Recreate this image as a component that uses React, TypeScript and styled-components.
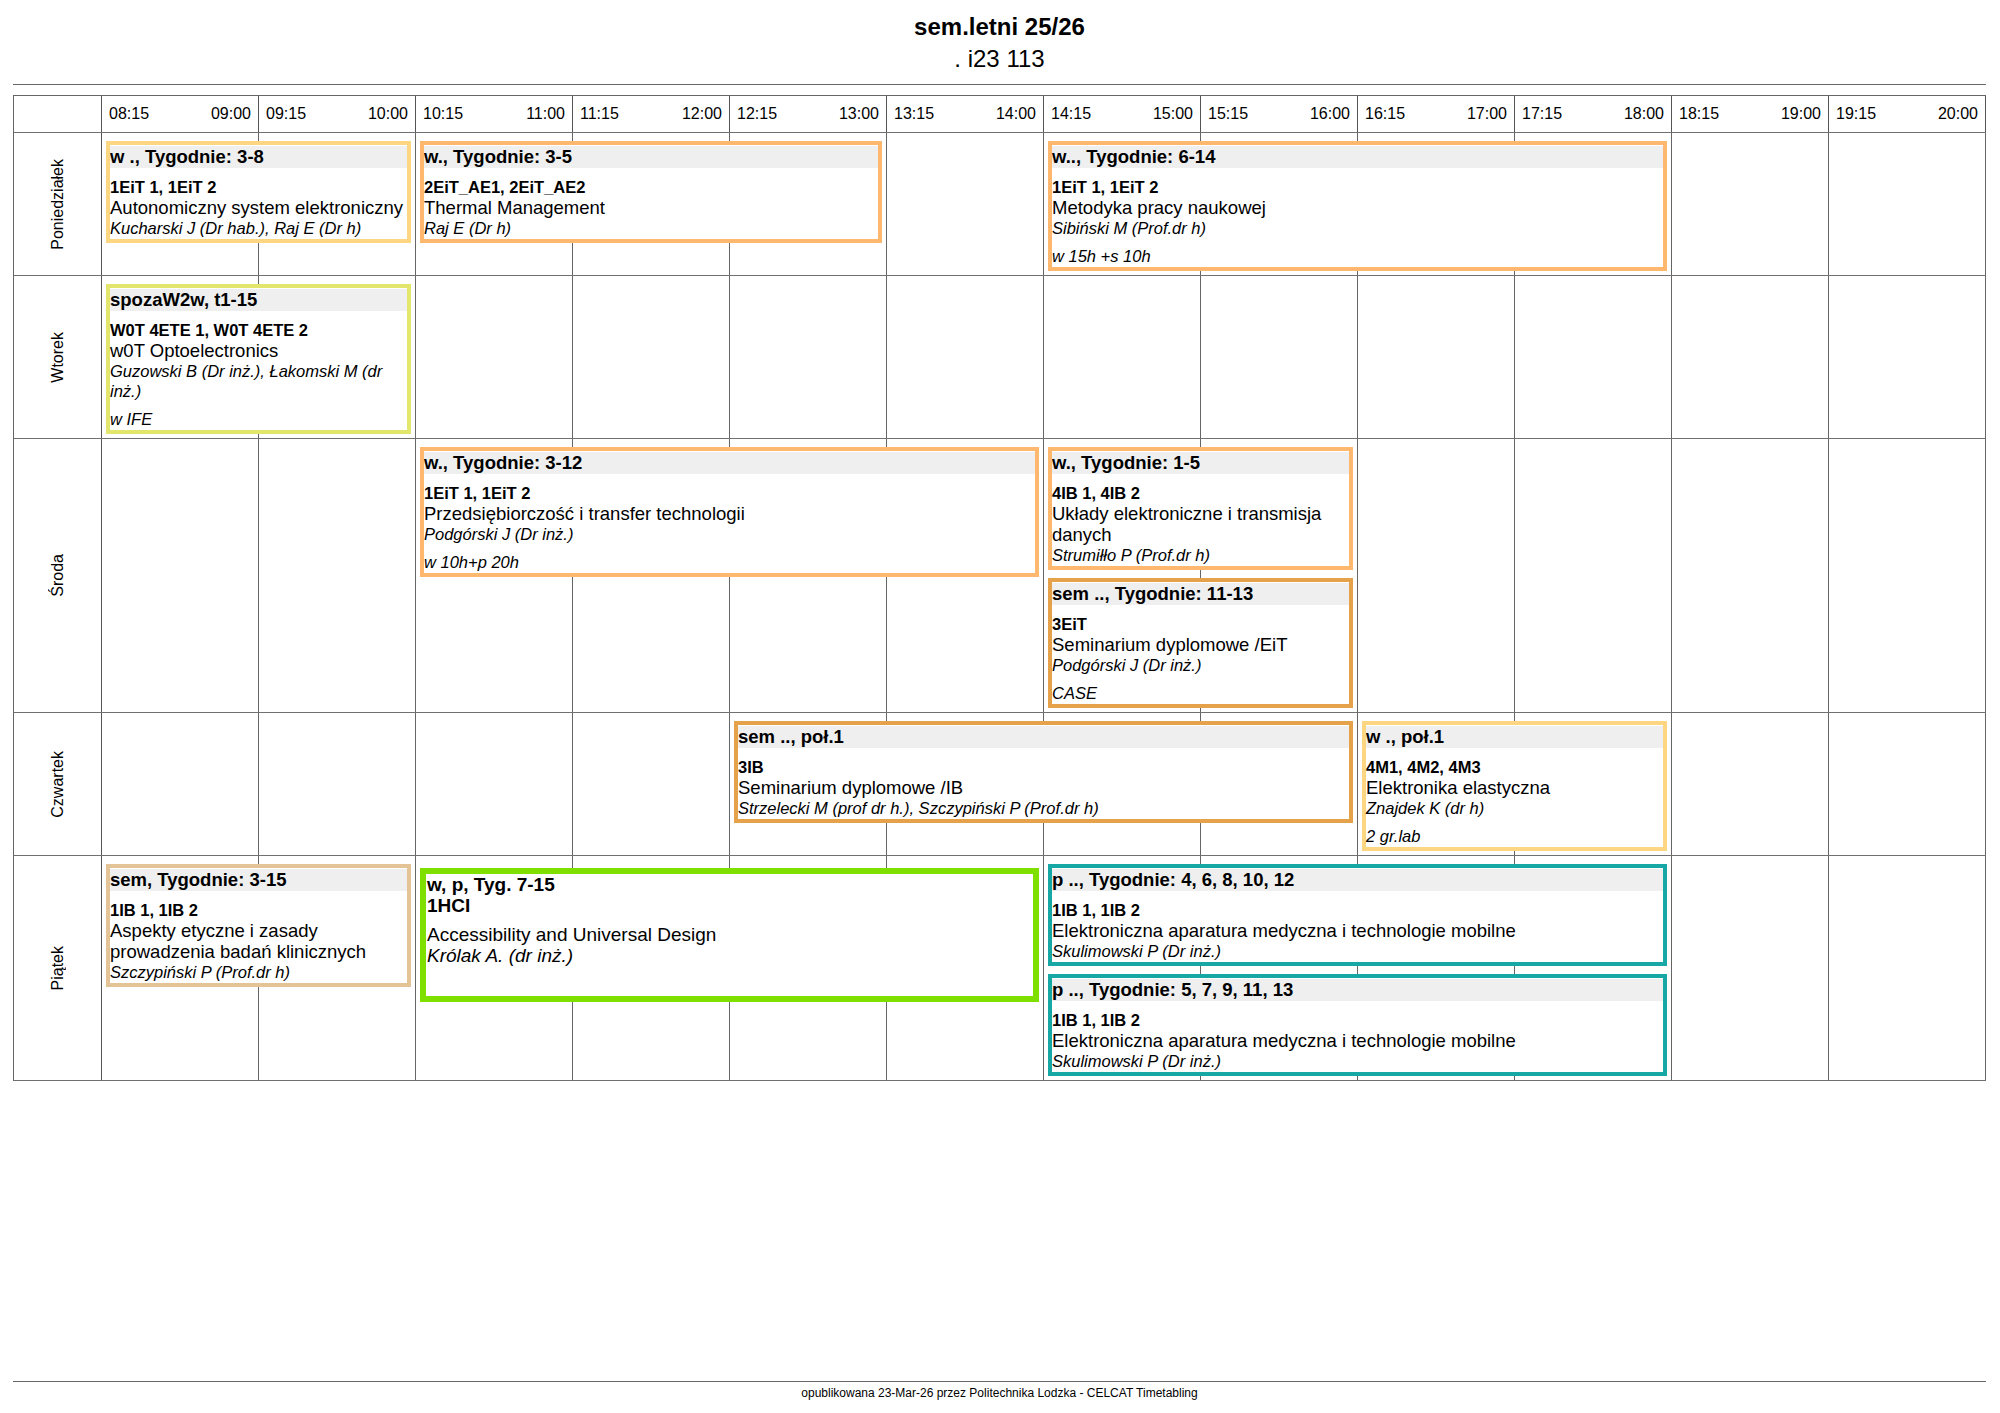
import React from "react";
import styled, { createGlobalStyle } from "styled-components";

const GlobalStyle = createGlobalStyle`
  html, body {
    margin: 0;
    padding: 0;
    background: #fff;
  }
  body {
    font-family: "Liberation Sans", Arial, Helvetica, sans-serif;
    color: #000;
  }
`;

const SLOT = 157;
const DAY_COL = 88;

const Page = styled.div`
  box-sizing: border-box;
  width: 2000px;
  height: 1413px;
  padding: 0 14px 0 13px;
  display: flex;
  flex-direction: column;
`;

const TitleBlock = styled.header`
  padding-top: 13px;
  text-align: center;
`;

const Title = styled.h1`
  margin: 0;
  font-size: 24px;
  line-height: 28px;
  font-weight: 700;
`;

const Subtitle = styled.div`
  margin-top: 4px;
  font-size: 24px;
  line-height: 28px;
`;

const Rule = styled.hr`
  margin: 11px 0 0;
  border: none;
  border-top: 1px solid #666;
  height: 0;
`;

const Table = styled.div`
  margin-top: 10px;
  width: ${DAY_COL + SLOT * 12 + 1}px;
  box-sizing: border-box;
  border-left: 1px solid #666;
  border-top: 1px solid #666;
`;

const Row = styled.div`
  display: grid;
  grid-template-columns: ${DAY_COL}px repeat(12, ${SLOT}px);
  border-bottom: 1px solid #707070;
`;

const HeadCorner = styled.div`
  border-right: 1px solid #555;
  height: 36px;
`;

const TimeCell = styled.div`
  box-sizing: border-box;
  height: 36px;
  display: flex;
  align-items: center;
  justify-content: space-between;
  padding: 0 7px;
  border-right: 1px solid #555;
  font-size: 16px;
`;

const DayLabel = styled.div`
  grid-column: 1;
  grid-row: 1;
  border-right: 1px solid #555;
  display: flex;
  align-items: center;
  justify-content: center;
`;

const DayText = styled.span`
  writing-mode: vertical-rl;
  transform: rotate(180deg);
  font-size: 16px;
  line-height: 18px;
`;

const SlotCell = styled.div<{ $col: number }>`
  grid-column: ${(p) => p.$col};
  grid-row: 1;
  border-right: 1px solid #666;
`;

const Stack = styled.div<{ $start: number; $span: number }>`
  grid-column: ${(p) => p.$start + 2} / span ${(p) => p.$span};
  grid-row: 1;
  position: relative;
  z-index: 1;
  display: flex;
  flex-direction: column;
  gap: 8px;
  padding: 8px 5px 4px 4px;
  align-self: start;
`;

const EventBox = styled.div<{ $color: string }>`
  background: #fff;
  border: 4px solid ${(p) => p.$color};
  padding: 1px 0;
`;

const EventTitle = styled.div`
  background: #efefef;
  height: 22px;
  line-height: 22px;
  font-size: 18.5px;
  font-weight: 700;
  white-space: nowrap;
  overflow: hidden;
  margin-bottom: 9px;
`;

const Groups = styled.div`
  font-size: 16.5px;
  line-height: 20px;
  font-weight: 700;
`;

const Subject = styled.div`
  font-size: 18.5px;
  line-height: 21px;
`;

const Lecturer = styled.div`
  font-size: 16.5px;
  line-height: 20px;
  font-style: italic;
`;

const Note = styled.div`
  margin-top: 8px;
  font-size: 16.5px;
  line-height: 20px;
  font-style: italic;
`;

const PlainBox = styled.div<{ $color: string }>`
  box-sizing: border-box;
  height: 134px;
  margin-top: 4px;
  background: #fff;
  border: 6px solid ${(p) => p.$color};
  padding: 0 0 0 1px;
  font-size: 19px;
  line-height: 21px;
`;

const PlainHead = styled.div`
  font-weight: 700;
`;

const PlainSubject = styled.div`
  margin-top: 8px;
`;

const PlainLecturer = styled.div`
  font-style: italic;
`;

const Footer = styled.footer`
  margin-top: auto;
  border-top: 1px solid #666;
  padding: 4px 0 13px;
  text-align: center;
  font-size: 12px;
  line-height: 14px;
`;

type Ev = {
  title: string;
  groups: string;
  subject: string;
  lecturer: string;
  note?: string;
  color: string;
  plain?: boolean;
};

type Group = { start: number; span: number; events: Ev[] };
type Day = { name: string; groups: Group[] };

const C = {
  yellow: "#fcd680",
  orange: "#ffb86e",
  dark: "#e6a14b",
  lime: "#e2e66c",
  tan: "#e4c497",
  green: "#7fe000",
  teal: "#17a8a6",
};

const times: [string, string][] = [
  ["08:15", "09:00"],
  ["09:15", "10:00"],
  ["10:15", "11:00"],
  ["11:15", "12:00"],
  ["12:15", "13:00"],
  ["13:15", "14:00"],
  ["14:15", "15:00"],
  ["15:15", "16:00"],
  ["16:15", "17:00"],
  ["17:15", "18:00"],
  ["18:15", "19:00"],
  ["19:15", "20:00"],
];

const days: Day[] = [
  {
    name: "Poniedziałek",
    groups: [
      {
        start: 0,
        span: 2,
        events: [
          {
            title: "w ., Tygodnie: 3-8",
            groups: "1EiT 1, 1EiT 2",
            subject: "Autonomiczny system elektroniczny",
            lecturer: "Kucharski J (Dr hab.), Raj E (Dr h)",
            color: C.yellow,
          },
        ],
      },
      {
        start: 2,
        span: 3,
        events: [
          {
            title: "w., Tygodnie: 3-5",
            groups: "2EiT_AE1, 2EiT_AE2",
            subject: "Thermal Management",
            lecturer: "Raj E (Dr h)",
            color: C.orange,
          },
        ],
      },
      {
        start: 6,
        span: 4,
        events: [
          {
            title: "w.., Tygodnie: 6-14",
            groups: "1EiT 1, 1EiT 2",
            subject: "Metodyka pracy naukowej",
            lecturer: "Sibiński M (Prof.dr h)",
            note: "w 15h +s 10h",
            color: C.orange,
          },
        ],
      },
    ],
  },
  {
    name: "Wtorek",
    groups: [
      {
        start: 0,
        span: 2,
        events: [
          {
            title: "spozaW2w, t1-15",
            groups: "W0T 4ETE 1, W0T 4ETE 2",
            subject: "w0T Optoelectronics",
            lecturer: "Guzowski B (Dr inż.), Łakomski M (dr inż.)",
            note: "w IFE",
            color: C.lime,
          },
        ],
      },
    ],
  },
  {
    name: "Środa",
    groups: [
      {
        start: 2,
        span: 4,
        events: [
          {
            title: "w., Tygodnie: 3-12",
            groups: "1EiT 1, 1EiT 2",
            subject: "Przedsiębiorczość i transfer technologii",
            lecturer: "Podgórski J (Dr inż.)",
            note: "w 10h+p 20h",
            color: C.orange,
          },
        ],
      },
      {
        start: 6,
        span: 2,
        events: [
          {
            title: "w., Tygodnie: 1-5",
            groups: "4IB 1, 4IB 2",
            subject: "Układy elektroniczne i transmisja danych",
            lecturer: "Strumiłło P (Prof.dr h)",
            color: C.orange,
          },
          {
            title: "sem .., Tygodnie: 11-13",
            groups: "3EiT",
            subject: "Seminarium dyplomowe /EiT",
            lecturer: "Podgórski J (Dr inż.)",
            note: "CASE",
            color: C.dark,
          },
        ],
      },
    ],
  },
  {
    name: "Czwartek",
    groups: [
      {
        start: 4,
        span: 4,
        events: [
          {
            title: "sem .., poł.1",
            groups: "3IB",
            subject: "Seminarium dyplomowe /IB",
            lecturer: "Strzelecki M (prof dr h.), Szczypiński P (Prof.dr h)",
            color: C.dark,
          },
        ],
      },
      {
        start: 8,
        span: 2,
        events: [
          {
            title: "w ., poł.1",
            groups: "4M1, 4M2, 4M3",
            subject: "Elektronika elastyczna",
            lecturer: "Znajdek K (dr h)",
            note: "2 gr.lab",
            color: C.yellow,
          },
        ],
      },
    ],
  },
  {
    name: "Piątek",
    groups: [
      {
        start: 0,
        span: 2,
        events: [
          {
            title: "sem, Tygodnie: 3-15",
            groups: "1IB 1, 1IB 2",
            subject: "Aspekty etyczne i zasady prowadzenia badań klinicznych",
            lecturer: "Szczypiński P (Prof.dr h)",
            color: C.tan,
          },
        ],
      },
      {
        start: 2,
        span: 4,
        events: [
          {
            title: "w, p, Tyg. 7-15",
            groups: "1HCI",
            subject: "Accessibility and Universal Design",
            lecturer: "Królak A. (dr inż.)",
            color: C.green,
            plain: true,
          },
        ],
      },
      {
        start: 6,
        span: 4,
        events: [
          {
            title: "p .., Tygodnie: 4, 6, 8, 10, 12",
            groups: "1IB 1, 1IB 2",
            subject: "Elektroniczna aparatura medyczna i technologie mobilne",
            lecturer: "Skulimowski P (Dr inż.)",
            color: C.teal,
          },
          {
            title: "p .., Tygodnie: 5, 7, 9, 11, 13",
            groups: "1IB 1, 1IB 2",
            subject: "Elektroniczna aparatura medyczna i technologie mobilne",
            lecturer: "Skulimowski P (Dr inż.)",
            color: C.teal,
          },
        ],
      },
    ],
  },
];

const Event: React.FC<{ ev: Ev }> = ({ ev }) => {
  if (ev.plain) {
    return (
      <PlainBox $color={ev.color}>
        <PlainHead>{ev.title}</PlainHead>
        <PlainHead>{ev.groups}</PlainHead>
        <PlainSubject>{ev.subject}</PlainSubject>
        <PlainLecturer>{ev.lecturer}</PlainLecturer>
      </PlainBox>
    );
  }
  return (
    <EventBox $color={ev.color}>
      <EventTitle>{ev.title}</EventTitle>
      <Groups>{ev.groups}</Groups>
      <Subject>{ev.subject}</Subject>
      <Lecturer>{ev.lecturer}</Lecturer>
      {ev.note && <Note>{ev.note}</Note>}
    </EventBox>
  );
};

const App: React.FC = () => {
  return (
    <>
      <GlobalStyle />
      <Page>
        <TitleBlock>
          <Title>sem.letni 25/26</Title>
          <Subtitle>. i23 113</Subtitle>
        </TitleBlock>
        <Rule />
        <Table>
          <Row>
            <HeadCorner />
            {times.map(([from, to]) => (
              <TimeCell key={from}>
                <span>{from}</span>
                <span>{to}</span>
              </TimeCell>
            ))}
          </Row>
          {days.map((day) => (
            <Row key={day.name}>
              <DayLabel>
                <DayText>{day.name}</DayText>
              </DayLabel>
              {times.map(([from], i) => (
                <SlotCell key={from} $col={i + 2} />
              ))}
              {day.groups.map((g) => (
                <Stack key={g.start} $start={g.start} $span={g.span}>
                  {g.events.map((ev) => (
                    <Event key={ev.title} ev={ev} />
                  ))}
                </Stack>
              ))}
            </Row>
          ))}
        </Table>
        <Footer>
          opublikowana 23-Mar-26 przez Politechnika Lodzka - CELCAT Timetabling
        </Footer>
      </Page>
    </>
  );
};

export default App;
